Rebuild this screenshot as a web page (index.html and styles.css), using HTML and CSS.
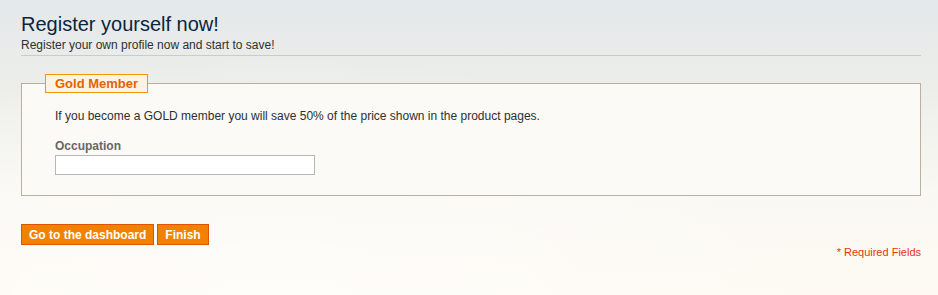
FILE: index.html
```html
<!DOCTYPE html>
<html lang="en">
<head>
  <meta charset="UTF-8">
  <meta name="viewport" content="width=device-width, initial-scale=1.0">
  <title>Register</title>
  <link rel="stylesheet" href="styles.css">
</head>
<body>
  <div class="page">
    <div class="page-title">
      <h1>Register yourself now!</h1>
      <p>Register your own profile now and start to save!</p>
    </div>

    <fieldset class="group">
      <legend>Gold Member</legend>
      <p class="intro">If you become a GOLD member you will save 50% of the price shown in the product pages.</p>
      <label for="occupation">Occupation</label>
      <input type="text" id="occupation" class="input-text">
    </fieldset>

    <div class="buttons">
      <button class="btn">Go to the dashboard</button>
      <button class="btn">Finish</button>
    </div>
    <p class="required">* Required Fields</p>
  </div>
</body>
</html>
```

FILE: styles.css
```css
html, body{
  margin: 0;
  height: 100%;
}

body{
  font-family: "Liberation Sans", Arial, sans-serif;
  font-size: 12px;
  color: #2f2f2f;
  background:
    radial-gradient(ellipse at 30% 110%, rgba(255,255,255,0.6) 0%, rgba(255,255,255,0) 60%),
    linear-gradient(to bottom, #e3e8ea 0%, #edeeea 30%, #f9f8f3 65%, #fefaf3 100%);
}

.page{
  width: 900px;
  padding: 12px 0 0 21px;
}

.page-title{
  border-bottom: 1px solid #cbcbcb;
  padding-bottom: 2px;
}
.page-title h1{
  margin: 0;
  font-size: 20px;
  font-weight: normal;
  line-height: 24px;
  color: #0a263c;
}
.page-title p{
  margin: 2px 0 0;
  font-size: 12px;
  line-height: 15px;
  color: #2f2f2f;
}

.group{
  margin: 18px 0 0;
  padding: 16px 33px 20px;
  border: 1px solid #bbafa0;
  background: #fbfaf6;
}
.group legend{
  margin-left: -10px;
  padding: 0 9px;
  height: 19px;
  line-height: 17px;
  box-sizing: border-box;
  border: 1px solid #f19900;
  background: #fdf3e4;
  color: #e76200;
  font-weight: bold;
  font-size: 13px;
}

.intro{
  margin: 0 0 15px;
  line-height: 15px;
  color: #2f2f2f;
}

.group label{
  display: block;
  font-weight: bold;
  color: #666;
  line-height: 15px;
  margin-bottom: 1px;
}

.input-text{
  display: block;
  width: 260px;
  height: 20px;
  box-sizing: border-box;
  border: 1px solid #b6b6b6;
  background: #fff;
  margin: 0;
}

.buttons{
  display: flex;
  gap: 3px;
  margin-top: 28px;
}
.btn{
  height: 21px;
  padding: 0 7px;
  border: 1px solid #de5400;
  background: #f18200;
  color: #fff;
  font-family: "Liberation Sans", Arial, sans-serif;
  font-size: 12px;
  font-weight: bold;
  cursor: pointer;
}

.required{
  margin: 1px 0 0;
  text-align: right;
  font-size: 11px;
  color: #eb340a;
}
```
